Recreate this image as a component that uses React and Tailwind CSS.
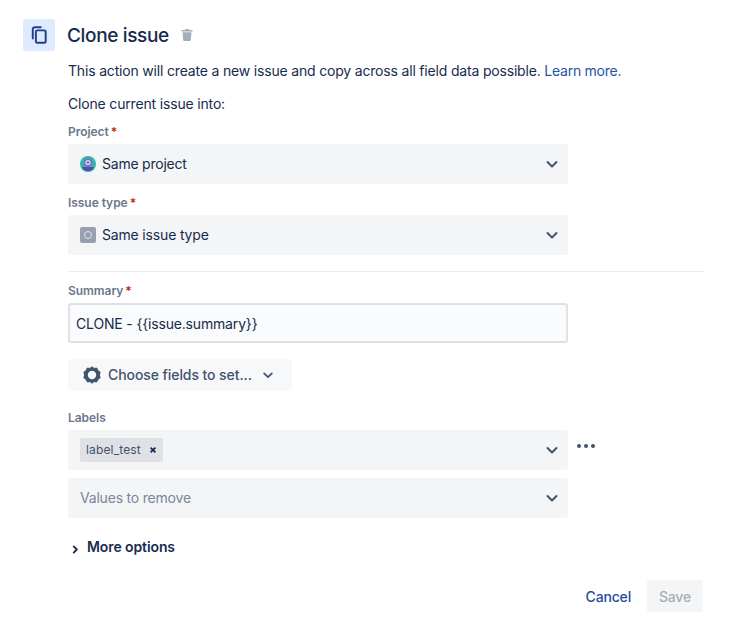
import React from 'react';

const Chevron = ({ className = 'w-[14px] h-[14px]' }) => (
  <svg viewBox="0 0 14 14" className={className} fill="none" stroke="#42526e" strokeWidth="2" strokeLinecap="round" strokeLinejoin="round">
    <path d="M2.500 5l4.500 4.500L11.500 5" />
  </svg>
);

const FieldLabel = ({ children, required }) => (
  <div className="h-[13px] flex items-center text-[12px] leading-[13px] font-semibold tracking-[-0.05px] text-[#6b778c]">
    {children}
    {required && <span className="ml-[2px] text-[#bf2600]">*</span>}
  </div>
);

const SelectBox = ({ children }) => (
  <div className="w-[500px] h-[40px] bg-[#f4f5f7] rounded-[3px] flex items-center justify-between pl-[12px] pr-[9px]">
    <div className="flex items-center gap-[6px]">{children}</div>
    <Chevron />
  </div>
);

const ProjectIcon = () => (
  <svg viewBox="0 0 16 16" className="w-4 h-4">
    <circle cx="8" cy="8" r="8" fill="#35b5ad" />
    <path d="M2 11h12a6.500 6.500 0 0 1-12 0z" fill="#5a48a6" />
    <circle cx="8" cy="6.500" r="4.200" fill="#7a6cc8" />
    <circle cx="8" cy="6.500" r="2.600" fill="#d5e0f5" />
    <circle cx="8" cy="6.500" r="1.200" fill="#6a5bb8" />
  </svg>
);

const IssueTypeIcon = () => (
  <div className="w-4 h-4 rounded-[2px] bg-[#97a0af] flex items-center justify-center">
    <div className="w-[8px] h-[8px] rounded-full border border-[#dfe1e6]" />
  </div>
);

export default function App() {
  return (
    <div className="w-[736px] h-[638px] bg-white text-[#172b4d] text-[14px] tracking-[-0.17px] font-['Inter',sans-serif] pt-[19px] pl-[23px] overflow-hidden">
      <div className="flex items-center h-[32px]">
        <div className="w-[32px] h-[32px] rounded-[3px] bg-[#deebff] flex items-center justify-center">
          <svg viewBox="0 0 18 20" className="w-[16px] h-[18px]" fill="none" stroke="#253f85" strokeWidth="2.200">
            <path d="M2 14V3.500C2 2.100 3 1.200 4.500 1.200H11" strokeLinecap="round" />
            <rect x="5.500" y="4.800" width="11" height="14" rx="1.500" />
          </svg>
        </div>
        <h1 className="ml-[12px] pt-[1px] text-[19px] tracking-[-0.35px] leading-[32px] font-medium text-[#172b4d]">Clone issue</h1>
        <svg viewBox="0 0 12 12" className="ml-[12px] w-[12px] h-[12px]" fill="#a5adba">
          <path d="M4.500 0h3l.6 1H11.500v1.500H.5V1h3.400z" />
          <path d="M1.500 3.300h9l-.7 7.800a1 1 0 0 1-1 .9H3.200a1 1 0 0 1-1-.9z" />
        </svg>
      </div>

      <div className="pl-[45px]">
        <p className="mt-[11px] h-[17px] leading-[17px] whitespace-nowrap tracking-[-0.18px]">
          This action will create a new issue and copy across all field data possible.{' '}
          <span className="text-[#1f55a8] tracking-[-0.25px]">Learn more.</span>
        </p>
        <p className="mt-[16px] h-[17px] leading-[17px]">Clone current issue into:</p>

        <div className="mt-[13px]"><FieldLabel required>Project</FieldLabel></div>
        <div className="mt-[6px]">
          <SelectBox>
            <ProjectIcon />
            <span className="pb-[2px] tracking-[-0.22px]">Same project</span>
          </SelectBox>
        </div>

        <div className="mt-[12px]"><FieldLabel required>Issue type</FieldLabel></div>
        <div className="mt-[6px]">
          <SelectBox>
            <IssueTypeIcon />
            <span className="pb-[2px]">Same issue type</span>
          </SelectBox>
        </div>

        <div className="mt-[16px] w-[636px] h-px bg-[#ebecf0]" />

        <div className="mt-[12px]"><FieldLabel required>Summary</FieldLabel></div>
        <div className="mt-[6px] w-[500px] h-[40px] bg-[#fafbfc] border-2 border-[#dfe1e6] rounded-[3px] flex items-center pl-[6px]">
          CLONE - {'{{'}issue.summary{'}}'}
        </div>

        <div className="mt-[16px] w-[224px] h-[32px] bg-[#f7f8f9] rounded-[3px] flex items-center pl-[14px] text-[#42526e] font-medium tracking-[-0.08px]">
          <svg viewBox="0 0 20 20" className="w-[20px] h-[20px]" fill="none" stroke="#42526e" strokeLinejoin="round">
            <path d="M10 1.800l2 1.600 2.800-.3 1 2.500 2.300 1.500-.7 2.900.7 2.900-2.300 1.500-1 2.500-2.800-.3-2 1.600-2-1.600-2.800.3-1-2.500-2.300-1.500.7-2.900-.7-2.900 2.300-1.500 1-2.500 2.800.3z" fill="#42526e" strokeWidth="1" />
            <circle cx="10" cy="10" r="4.200" fill="#f7f8f9" stroke="none" />
          </svg>
          <span className="ml-[6px] pb-[2px] whitespace-nowrap">Choose fields to set...</span>
          <Chevron className="ml-[10px] w-[12px] h-[12px]" />
        </div>

        <div className="mt-[20px]"><FieldLabel>Labels</FieldLabel></div>
        <div className="mt-[6px] flex items-start">
          <SelectBox>
            <div className="h-[24px] bg-[#dfe1e6] rounded-[2px] flex items-center pl-[6px] pr-[6px] text-[12px] tracking-[0.15px] text-[#42526e]">
              <span>label_test</span>
              <svg viewBox="0 0 10 10" className="ml-[8px] w-[8px] h-[8px]" fill="none" stroke="#172b4d" strokeWidth="2.200">
                <path d="M2 2l6 6M8 2l-6 6" />
              </svg>
            </div>
          </SelectBox>
          <div className="ml-[9px] mt-[14px] flex gap-[3px]">
            <span className="w-[4px] h-[4px] rounded-full bg-[#42526e]" />
            <span className="w-[4px] h-[4px] rounded-full bg-[#42526e]" />
            <span className="w-[4px] h-[4px] rounded-full bg-[#42526e]" />
          </div>
        </div>
        <div className="mt-[8px]">
          <SelectBox>
            <span className="pb-[2px] text-[#7a869a] tracking-[-0.2px]">Values to remove</span>
          </SelectBox>
        </div>

        <div className="mt-[20px] h-[17px] flex items-center font-semibold text-[#172b4d]">
          <svg viewBox="0 0 10 10" className="ml-[3px] mt-[5px] w-[9px] h-[9px]" fill="none" stroke="#172b4d" strokeWidth="2" strokeLinecap="round" strokeLinejoin="round">
            <path d="M3 1.500L6.500 5 3 8.500" />
          </svg>
          <span className="ml-[7px] tracking-[-0.1px]">More options</span>
        </div>

        <div className="mt-[25px] w-[635px] flex items-center justify-end">
          <span className="font-medium text-[#254a9e]">Cancel</span>
          <div className="ml-[16px] w-[56px] h-[32px] bg-[#f4f5f7] rounded-[3px] flex items-center justify-center font-medium text-[#a5adba]">Save</div>
        </div>
      </div>
    </div>
  );
}
